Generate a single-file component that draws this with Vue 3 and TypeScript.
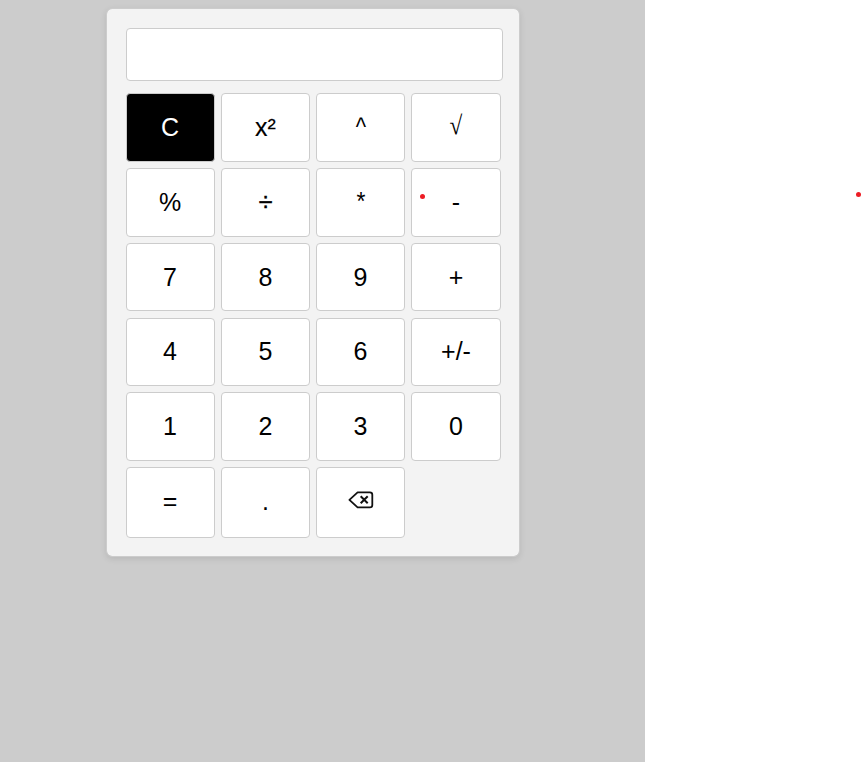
<script setup lang="ts">
interface Key {
  label: string
  kind?: 'clear' | 'root' | 'erase' | 'caret' | 'divide' | 'times' | 'square'
}

const rows: Key[][] = [
  [{ label: 'C', kind: 'clear' }, { label: 'x²', kind: 'square' }, { label: '^', kind: 'caret' }, { label: '√', kind: 'root' }],
  [{ label: '%' }, { label: '÷', kind: 'divide' }, { label: '*', kind: 'times' }, { label: '-' }],
  [{ label: '7' }, { label: '8' }, { label: '9' }, { label: '+' }],
  [{ label: '4' }, { label: '5' }, { label: '6' }, { label: '+/-' }],
  [{ label: '1' }, { label: '2' }, { label: '3' }, { label: '0' }],
  [{ label: '=' }, { label: '.' }, { label: '', kind: 'erase' }],
]
</script>

<template>
  <main class="page">
    <section class="stage">
      <div class="calculator">
        <div class="display"></div>
        <div class="keys">
          <div v-for="(row, i) in rows" :key="i" class="row">
            <button v-for="(key, j) in row" :key="j" type="button" class="key" :class="key.kind">
              <svg v-if="key.kind === 'erase'" class="erase-icon" viewBox="0 0 26 18">
                <path d="M9.6 1.4H21.9Q24.3 1.4 24.3 3.8V13.9Q24.3 16.3 21.9 16.3H9.6L1.4 8.85Z" />
                <path class="cross" d="M12.7 5.2 19.7 12.2M19.7 5.2 12.7 12.2" />
              </svg>
              <span v-else>{{ key.label }}</span>
            </button>
          </div>
        </div>
      </div>
    </section>
    <i class="dot dot-key"></i>
    <i class="dot dot-edge"></i>
  </main>
</template>

<style>
body {
  background: #fff;
}
</style>

<style scoped>
.page {
  position: relative;
  height: 762px;
  overflow: hidden;
  font-family: "Liberation Sans", Arial, sans-serif;
}
.stage {
  display: flex;
  justify-content: center;
  align-items: flex-start;
  box-sizing: border-box;
  width: 645px;
  height: 100%;
  padding: 8px 19px 0 0;
  background: #ccc;
}
.calculator {
  box-sizing: border-box;
  width: 414px;
  height: 549px;
  padding: 19px;
  border: 1px solid #ccc;
  border-radius: 6px;
  background: #f3f3f3;
  background-clip: padding-box;
  box-shadow: 0 2px 6px rgba(0, 0, 0, 0.1);
}
.display {
  box-sizing: border-box;
  width: 377px;
  height: 53px;
  margin-bottom: 12px;
  border: 1px solid #ccc;
  border-radius: 4px;
  background: #fff;
}
.keys {
  display: grid;
  grid-template-rows: 69px 69px 69px 68px 69px 71px;
  row-gap: 6px;
}
.row {
  display: grid;
  grid-template-columns: 89px 89px 89px 90px;
  column-gap: 6px;
}
.row:nth-child(3) {
  padding-bottom: 1px;
}
.key {
  display: flex;
  align-items: center;
  justify-content: center;
  min-width: 0;
  margin: 0;
  padding: 0;
  border: 1px solid #ccc;
  border-radius: 4px;
  background: #fff;
  color: #000;
  font: 25px/29px "Liberation Sans", Arial, sans-serif;
}
.key:first-child {
  padding-right: 1px;
}
.row:nth-child(4) .key,
.row:nth-child(6) .key {
  padding-bottom: 2px;
}
.clear {
  background: #000;
  color: #fff;
}
.root {
  font-family: "Liberation Serif", serif;
}
.root span {
  transform: translateY(-2px) scale(0.93, 1.05);
}
.caret span {
  transform: scaleX(0.88);
}
.times span {
  transform: translateY(-1px) scaleX(0.92);
}
.divide span {
  -webkit-text-stroke: 0.5px #000;
}
.square span {
  -webkit-text-stroke: 0.15px #000;
}
.erase-icon {
  width: 26px;
  height: 18px;
  margin-bottom: 4px;
  fill: none;
  stroke: #111;
  stroke-width: 1.8;
  stroke-linejoin: round;
}
.cross {
  stroke-width: 2;
}
.dot {
  position: absolute;
  width: 5px;
  height: 5px;
  border-radius: 50%;
  background: #ed1c24;
}
.dot-key {
  left: 420px;
  top: 194px;
}
.dot-edge {
  left: 856px;
  top: 192px;
}
</style>
